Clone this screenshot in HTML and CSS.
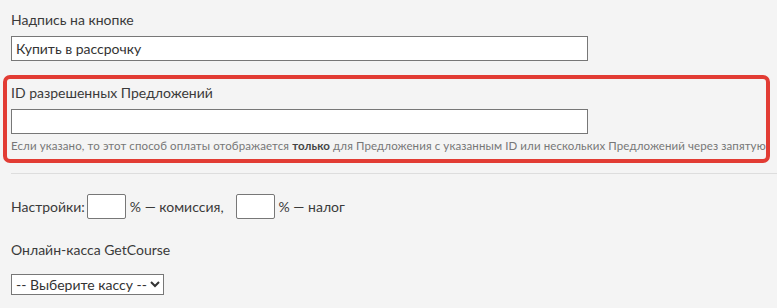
FILE: index.html
```html
<!DOCTYPE html>
<html lang="ru">
<head>
  <meta charset="UTF-8" />
  <title>Настройки способа оплаты</title>
  <link rel="stylesheet" href="styles.css">
</head>
<body>

  <div class="field">
    <label class="label">Надпись на кнопке</label>
    <input type="text" class="text-input" value="Купить в рассрочку">
  </div>

  <div class="highlight">
    <label class="label">ID разрешенных Предложений</label>
    <input type="text" class="text-input">
    <p class="hint">Если указано, то этот способ оплаты отображается <b>только</b> для Предложения с указанным ID или нескольких Предложений через запятую</p>
  </div>

  <hr class="divider">

  <div class="settings">
    <span>Настройки:</span>
    <input type="text" class="small-input">
    <span>% — комиссия,</span>
    <input type="text" class="small-input second">
    <span>% — налог</span>
  </div>

  <div class="field">
    <label class="label">Онлайн-касса GetCourse</label>
    <select class="select">
      <option>-- Выберите кассу --</option>
    </select>
  </div>

</body>
</html>
```

FILE: styles.css
```css
body {
  font-family: Lato, "Open Sans", sans-serif;
  font-size: 14px;
  color: #3a3a3a;
  background-color: #f4f4f4;
  margin: 0;
  padding: 10px 0 0 0;
}

.label {
  display: block;
  line-height: 20px;
  margin-bottom: 6px;
}

.field {
  padding: 0 11px;
}

.text-input {
  display: block;
  box-sizing: border-box;
  width: 577px;
  height: 25px;
  margin: 0;
  padding: 0 4px;
  font-family: inherit;
  font-size: 14px;
  color: #333;
  background: #fff;
  border: 1px solid #777;
  border-radius: 0;
}

.highlight {
  margin: 14px 7px 0 3px;
  padding: 4px 4px 5px 4px;
  border: 4px solid #e23c34;
  border-radius: 7px;
}

.hint {
  margin: 4px 0 0 0;
  font-size: 11.5px;
  letter-spacing: 0.1px;
  line-height: 16px;
  white-space: nowrap;
  color: #777;
}

.hint b {
  color: #444;
}

.divider {
  margin: 10px 0 0 11px;
  border: none;
  border-top: 1px solid #ddd;
}

.settings {
  display: flex;
  align-items: center;
  padding: 20px 11px 0 11px;
}

.small-input {
  box-sizing: border-box;
  width: 39px;
  height: 25px;
  margin: 0 4px 0 2px;
  background: #fff;
  border: 1px solid #777;
  border-radius: 2px;
}

.small-input.second {
  margin-left: 12px;
}

.settings + .field {
  padding-top: 21px;
}

.select {
  display: block;
  height: 21px;
  margin-top: 14px;
  font-family: inherit;
  font-size: 14px;
  color: #333;
  background: #fff;
  border: 1px solid #777;
  border-radius: 0;
}
```
